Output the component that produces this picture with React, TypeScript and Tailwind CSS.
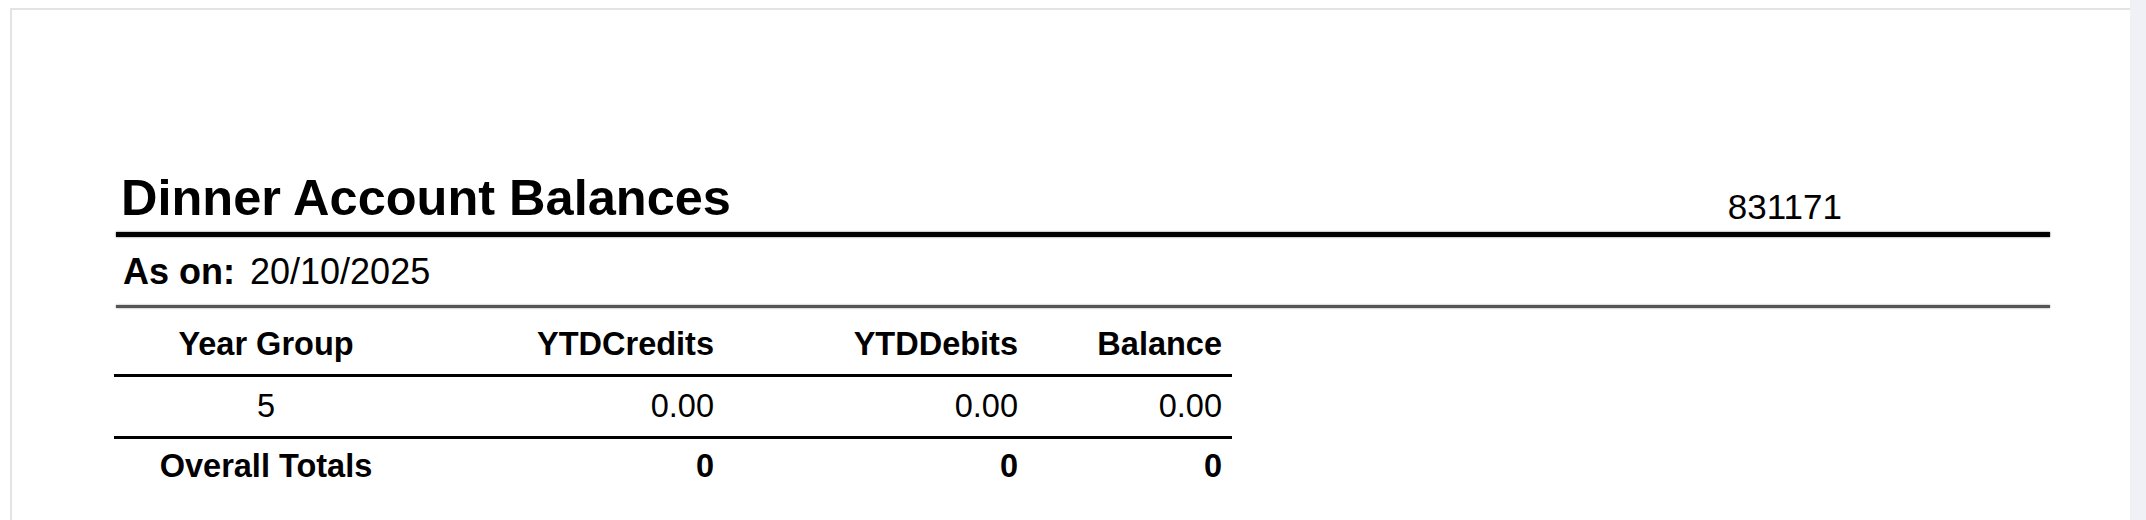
import React from 'react'

const rows = [{ group: '5', credits: '0.00', debits: '0.00', balance: '0.00' }]

export default function App() {
  return (
    <div className="flex h-[520px] w-full overflow-hidden bg-white font-['Liberation_Sans',Arial,sans-serif] text-black">
      <main className="flex-1 pl-[10px] pt-[8px]">
        <div className="h-full border-l-2 border-t-2 border-[#e3e3e3] pl-[104px] pt-[163px]">
          <div className="w-[1934px]">
            {/* report header */}
            <div className="flex items-end justify-between pl-[5px] pr-[208px]">
              <h1 className="text-[50.5px] font-bold leading-none">Dinner Account Balances</h1>
              <span className="text-[35px] leading-none">831171</span>
            </div>
            <div className="mt-[8px] h-[5px] bg-black shadow-[0_0_2px_rgba(0,0,0,0.7)]"></div>

            <div className="mt-[17px] flex items-baseline pl-[7px] text-[36px] leading-none">
              <span className="font-bold">As on:</span>
              <span className="ml-[15px]">20/10/2025</span>
            </div>
            <div className="mt-[15px] h-[3px] bg-[#555] shadow-[0_0_2px_rgba(0,0,0,0.5)]"></div>

            {/* balances table */}
            <table className="-ml-[2px] mt-[7px] w-[1118px] border-collapse text-[32.5px] leading-[36px]">
              <thead>
                <tr className="border-b-[3px] border-black font-bold">
                  <th className="w-[304px] pb-[12px] pt-[11px] text-center">Year Group</th>
                  <th className="w-[306px] pb-[12px] pr-[10px] pt-[11px] text-right">YTDCredits</th>
                  <th className="w-[304px] pb-[12px] pr-[10px] pt-[11px] text-right">YTDDebits</th>
                  <th className="w-[204px] pb-[12px] pr-[10px] pt-[11px] text-right">Balance</th>
                </tr>
              </thead>
              <tbody>
                {rows.map((r) => (
                  <tr key={r.group} className="border-b-[3px] border-black">
                    <td className="pb-[12px] pt-[11px] text-center">{r.group}</td>
                    <td className="pb-[12px] pr-[10px] pt-[11px] text-right">{r.credits}</td>
                    <td className="pb-[12px] pr-[10px] pt-[11px] text-right">{r.debits}</td>
                    <td className="pb-[12px] pr-[10px] pt-[11px] text-right">{r.balance}</td>
                  </tr>
                ))}
                <tr className="font-bold">
                  <td className="pb-[12px] pt-[9px] text-center">Overall Totals</td>
                  <td className="pb-[12px] pr-[10px] pt-[9px] text-right">0</td>
                  <td className="pb-[12px] pr-[10px] pt-[9px] text-right">0</td>
                  <td className="pb-[12px] pr-[10px] pt-[9px] text-right">0</td>
                </tr>
              </tbody>
            </table>
          </div>
        </div>
      </main>
      <aside className="h-full w-[16px] bg-[#f0f1f6]"></aside>
    </div>
  )
}
